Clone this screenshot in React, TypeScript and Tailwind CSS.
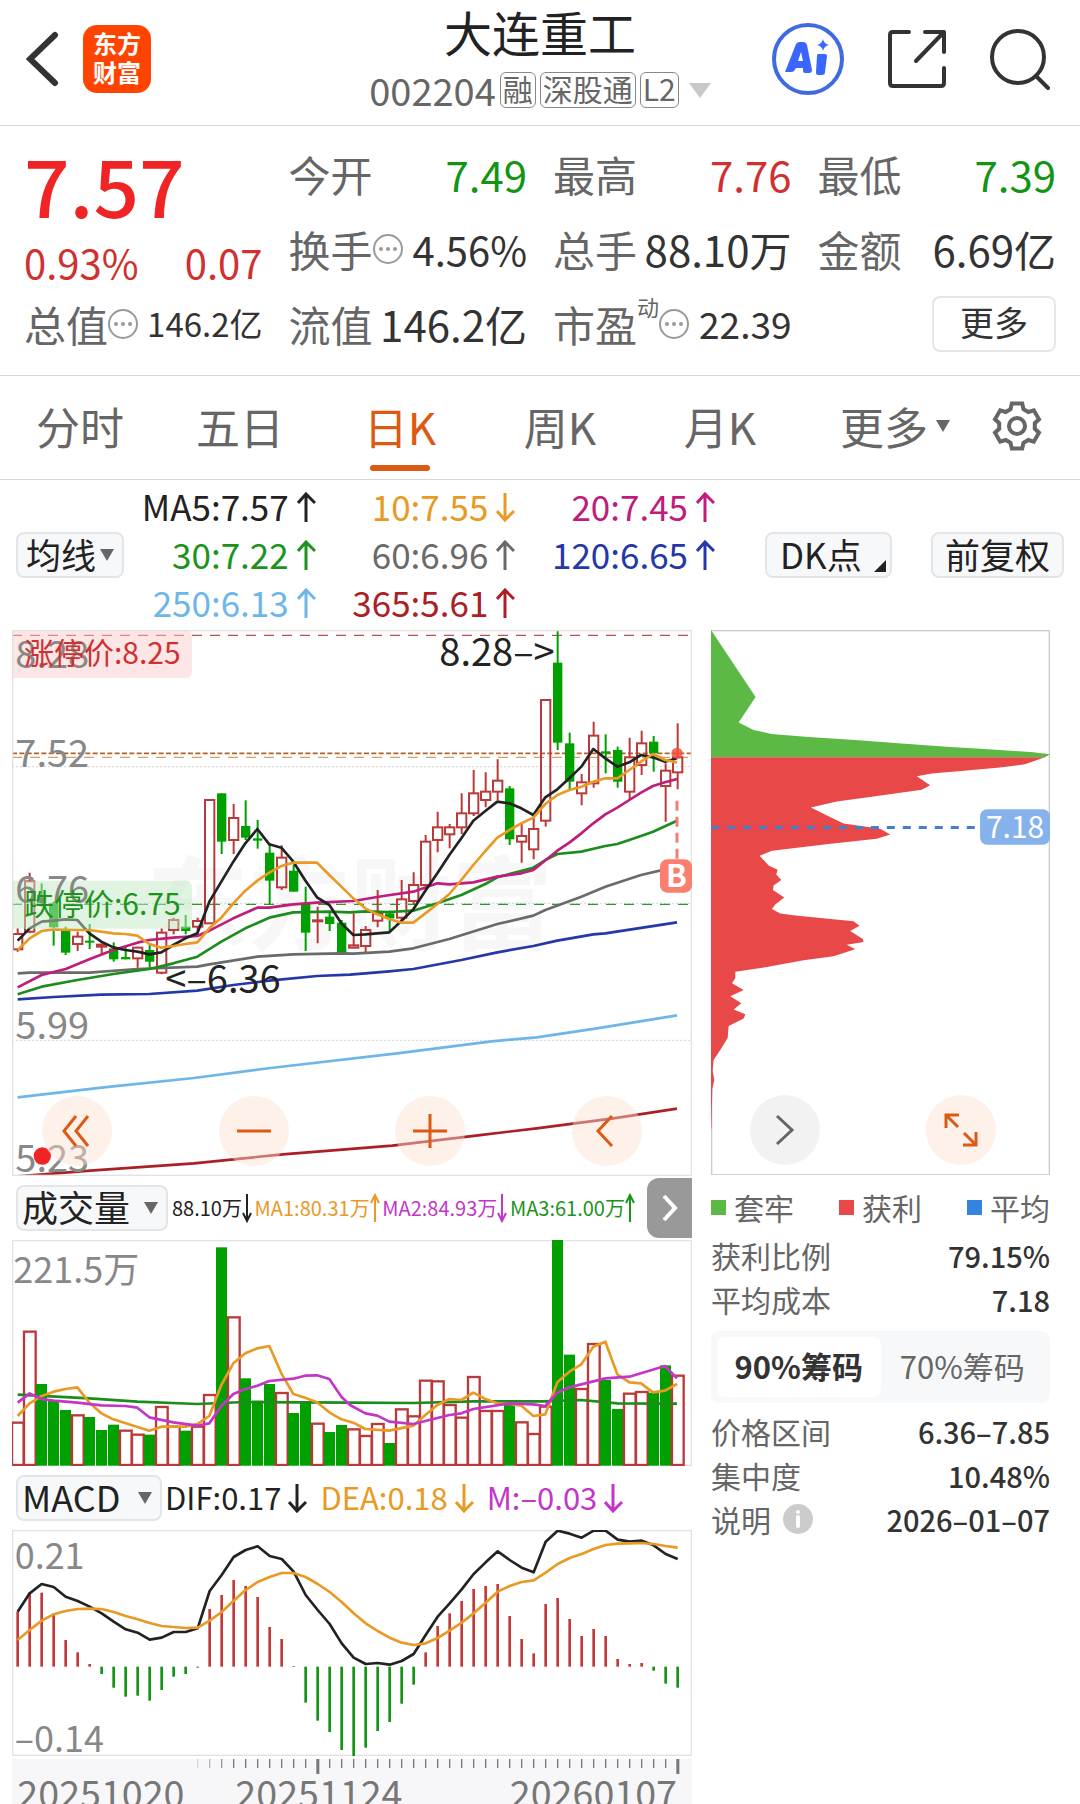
import React from "react";

const RED = "#b93a3a";
const GREEN = "#00a000";
const STEP = 36;
const FIRST = 53;
const xAt = (i: number) => FIRST + i * STEP;

type Candle = [kind: "r" | "g", high: number, top: number, bottom: number, low: number];

// Chart units: three per pixel at full width.
const candles: Candle[] = [
  ["r", 925, 942, 988, 995], ["r", 758, 784, 935, 940], ["g", 790, 825, 850, 860], ["g", 845, 850, 922, 977],
  ["g", 920, 932, 998, 1005], ["r", 935, 950, 972, 993], ["g", 912, 962, 968, 987], ["r", 970, 974, 980, 1005],
  ["g", 967, 985, 1018, 1025], ["g", 980, 1011, 1018, 1018], ["r", 980, 983, 1015, 1043], ["g", 975, 990, 1025, 1050],
  ["r", 925, 938, 1058, 1063], ["r", 893, 900, 930, 943], ["g", 885, 920, 933, 943], ["r", 893, 903, 920, 940],
  ["r", 540, 540, 910, 910], ["g", 520, 520, 665, 702], ["r", 552, 594, 660, 702], ["g", 541, 618, 653, 660],
  ["g", 600, 655, 662, 686], ["g", 675, 698, 782, 853], ["r", 676, 713, 802, 810], ["g", 735, 752, 815, 815],
  ["g", 800, 852, 938, 993], ["r", 860, 901, 904, 970], ["g", 878, 890, 912, 933], ["g", 900, 908, 998, 998],
  ["r", 880, 976, 983, 985], ["r", 918, 930, 978, 997], ["r", 810, 880, 902, 922], ["g", 872, 880, 895, 935],
  ["r", 780, 838, 893, 903], ["r", 757, 795, 843, 852], ["r", 645, 665, 795, 797], ["r", 575, 622, 660, 697],
  ["r", 612, 622, 643, 685], ["r", 520, 580, 622, 642], ["r", 450, 520, 580, 588], ["r", 457, 515, 540, 562],
  ["r", 418, 482, 515, 540], ["g", 498, 505, 658, 675], ["r", 607, 648, 665, 728], ["r", 590, 627, 688, 718],
  ["r", 240, 240, 602, 620], ["g", 30, 128, 368, 390], ["g", 338, 370, 485, 508], ["r", 462, 487, 520, 556],
  ["r", 305, 347, 490, 503], ["g", 343, 394, 400, 460], ["g", 380, 390, 485, 503], ["r", 353, 412, 515, 540],
  ["r", 332, 370, 435, 465], ["g", 348, 365, 400, 455], ["r", 430, 452, 498, 605], ["r", 310, 412, 457, 508],
];

const averages: { color: string; points: string }[] = [
  { color: "#6a6a6a", points: "53,1060 89,1058 268,1058 412,1047 592,1040 628,1033 772,1010 880,1003 1024,1000 1060,1001 1168,995 1240,985 1348,957 1492,912 1600,887 1636,870 1744,830 1816,800 1923,765 2031,740" },
  { color: "#2438a8", points: "53,1138 161,1131 304,1124 448,1122 592,1112 700,1095 808,1082 951,1068 1050,1064 1168,1054 1240,1047 1384,1020 1492,997 1600,978 1672,962 1780,943 1816,940 2031,907" },
  { color: "#6fb6e8", points: "53,1432 311,1402 582,1374 812,1344 1191,1300 1475,1264 1610,1252 1786,1226 2031,1186" },
  { color: "#ab1f27", points: "53,1669 271,1652 582,1630 839,1604 1177,1577 1434,1546 1610,1525 1840,1495 2031,1466" },
  { color: "#1c8c1c", points: "53,1123 125,1100 232,1080 340,1062 448,1047 520,1030 592,1010 664,965 736,925 808,893 880,877 988,875 1050,877 1096,874 1168,876 1240,872 1312,850 1384,825 1456,792 1492,772 1600,743 1636,720 1672,702 1744,695 1816,678 1852,672 1923,648 1959,635 2031,602" },
  { color: "#bf1c7c", points: "53,1102 125,1065 197,1047 268,1018 340,990 412,968 448,960 520,953 592,948 628,932 700,895 772,863 808,863 880,853 951,848 1060,843 1150,828 1240,815 1312,790 1348,793 1420,787 1492,770 1564,760 1600,750 1672,692 1708,668 1744,640 1780,610 1816,583 1852,563 1888,540 1923,518 1959,498 1995,487 2031,477" },
  { color: "#222222", points: "53,962 89,925 125,905 161,902 197,898 232,900 268,940 304,965 340,982 376,990 412,995 448,1003 484,997 520,975 556,955 592,940 628,845 664,785 700,725 736,670 772,627 808,673 844,683 880,725 915,780 951,832 988,855 1024,910 1060,945 1096,943 1132,940 1168,937 1204,903 1240,868 1276,812 1312,760 1348,705 1384,655 1420,602 1456,573 1492,545 1528,550 1564,565 1600,585 1636,532 1672,508 1708,475 1744,440 1780,387 1816,415 1852,440 1888,427 1923,405 1959,412 1995,425 2031,415" },
  { color: "#e89a24", points: "53,990 89,955 125,933 161,928 232,930 268,930 340,940 376,942 412,947 448,972 484,983 520,978 556,972 592,967 628,925 664,893 700,850 736,812 772,782 808,758 844,738 880,728 951,728 988,765 1024,800 1060,835 1096,865 1132,883 1168,897 1204,908 1240,908 1276,880 1312,852 1348,822 1384,780 1420,735 1456,693 1492,653 1528,630 1564,610 1600,593 1636,552 1672,525 1708,510 1744,500 1780,485 1816,475 1852,475 1888,450 1923,425 1959,402 1995,420 2031,427" },
];

const volumes =
  "578r 305r 462g 512g 540g 556r 561g 600g 584g 602r 614r 614g 531r 590r 602g 590r 495r 52g 262r 445g 512g 462g 489r 549g 517g 581r 606g 585g 598r 618r 582r 639g 538r 559r 452r 454r 525r 563r 441r 543r 543r 525g 577r 612r 530r 30g 374g 477r 342r 450g 537g 491r 486r 488g 406g 437r".split(" ");

const volumeLines = [
  { color: "#1c8c1c", points: "53,494 268,505 412,515 592,522 736,516 1050,518 1240,519 1420,514 1636,514 1744,510 1852,520 2031,521" },
  { color: "#e89a24", points: "53,558 89,520 125,498 161,485 197,477 232,472 268,518 304,550 340,568 448,602 484,590 556,590 592,582 628,558 664,465 700,400 736,370 772,355 808,348 844,430 880,492 915,503 951,517 988,547 1024,568 1060,578 1096,597 1168,602 1240,587 1276,555 1312,525 1348,507 1384,510 1420,488 1456,507 1492,520 1528,522 1564,527 1600,558 1636,553 1672,457 1708,425 1744,403 1780,350 1816,335 1852,433 1888,457 1923,460 1959,487 1995,482 2031,462" },
  { color: "#c436c8", points: "53,518 89,490 125,507 161,512 232,518 304,526 376,528 412,533 448,562 520,577 592,587 628,580 664,528 700,492 736,477 772,467 808,453 880,446 915,437 951,436 988,447 1024,500 1050,525 1096,550 1132,557 1168,575 1240,582 1276,573 1348,555 1384,550 1420,537 1528,520 1600,523 1636,528 1672,488 1708,472 1816,445 1888,440 1923,430 1995,408 2031,445" },
];

const macdBars = [335, 277, 278, 340, 420, 457, 492, 522, 563, 590, 587, 602, 570, 530, 522, 503, 327, 285, 240, 258, 291, 381, 417, 498, 608, 662, 696, 750, 768, 743, 693, 666, 611, 554, 457, 378, 340, 303, 267, 258, 252, 348, 417, 460, 312, 294, 357, 408, 387, 408, 477, 492, 489, 512, 551, 563];
const dif = [335, 280, 252, 261, 290, 303, 320, 340, 365, 388, 398, 419, 413, 396, 396, 385, 273, 225, 171, 150, 139, 168, 177, 215, 285, 330, 372, 430, 473, 492, 489, 494, 483, 462, 405, 350, 310, 268, 222, 187, 154, 180, 203, 217, 125, 92, 101, 113, 92, 92, 119, 125, 122, 136, 162, 177];
const dea = [420, 390, 362, 343, 333, 327, 326, 327, 336, 348, 358, 369, 378, 381, 384, 383, 362, 336, 302, 270, 246, 231, 219, 219, 231, 252, 276, 306, 340, 370, 393, 413, 428, 435, 430, 414, 392, 368, 340, 308, 275, 258, 246, 241, 218, 192, 174, 162, 147, 135, 131, 130, 129, 132, 138, 143];
const series = (values: number[]) => values.map((v, i) => `${xAt(i)},${v}`).join(" ");

const trapped = "0,0 134,201 83,278 128,300 181,312 293,321 433,330 573,341 718,351 798,356 968,367 1018,373 1003,382 0,382";
const profit =
  "0,382 1003,382 943,403 868,413 768,422 663,431 618,439 658,466 633,480 558,490 483,501 378,515 300,533 353,559 398,581 508,597 538,614 498,627 353,643 183,663 146,678 173,707 200,720 196,734 211,751 188,767 186,781 220,803 193,824 183,838 208,851 253,857 428,875 446,888 418,904 456,928 458,937 408,945 433,959 368,980 278,992 168,1012 73,1026 73,1045 63,1061 98,1081 58,1100 91,1121 68,1140 103,1154 98,1167 53,1189 50,1225 33,1253 8,1291 5,1324 10,1351 4,1378 1,1498 0,1498";

const gearPath = (() => {
  const pts: string[] = [];
  for (let k = 0; k < 6; k++) {
    for (const [r, d] of [[18, -21], [23, -13], [23, 13], [18, 21]]) {
      const a = ((k * 60 - 90 + d) * Math.PI) / 180;
      pts.push(`${(27 + r * Math.cos(a)).toFixed(1)} ${(27 + r * Math.sin(a)).toFixed(1)}`);
    }
  }
  return `M${pts.join("L")}Z`;
})();

function Arrow({ down = false, narrow = false }: { down?: boolean; narrow?: boolean }) {
  return (
    <svg viewBox={narrow ? "0 0 10 30" : "0 0 19 30"} className={narrow ? "h-[30px] w-[10px] shrink-0" : "h-[30px] w-[19px] shrink-0"} fill="none" stroke="currentColor" strokeWidth={narrow ? 2 : 3} role="img" aria-label={down ? "下降" : "上升"}>
      {narrow ? (
        <path d={down ? "M5 1V28M1 20L5 28L9 20" : "M5 29V2M1 10L5 2L9 10"} />
      ) : (
        <path d={down ? "M9 1V28M1 19L9 28L18 19" : "M9 30V2M1 11L9 2L18 11"} />
      )}
    </svg>
  );
}

function Caret({ className }: { className: string }) {
  return (
    <svg viewBox="0 0 14 12" className={className} fill="currentColor" preserveAspectRatio="none" aria-hidden="true">
      <path d="M0 0H14L7 12Z" />
    </svg>
  );
}

function More() {
  return (
    <svg viewBox="0 0 30 30" className="size-[30px] shrink-0" fill="none" stroke="#999" strokeWidth="2" aria-hidden="true">
      <circle cx="15" cy="15" r="14" />
      <g fill="#999" stroke="none">
        <circle cx="8" cy="15" r="2" />
        <circle cx="15" cy="15" r="2" />
        <circle cx="22" cy="15" r="2" />
      </g>
    </svg>
  );
}

function Stat({ label, value, tone = "text-[#333]", size = "text-[42px]", more, sup }: { label: string; value: string; tone?: string; size?: string; more?: boolean; sup?: string }) {
  return (
    <div className="flex h-[75px] items-center whitespace-nowrap">
      <dt className="flex items-center text-[42px] text-[#666]">
        {label}
        {sup && <sup className="top-0 mb-9 text-[22px]">{sup}</sup>}
        {more && <More />}
      </dt>
      <dd className={`ml-auto ${size} ${tone}`}>{value}</dd>
    </div>
  );
}

function Header() {
  const badge = "flex h-9 items-center rounded-md border border-[#888] px-[2px] pb-1 text-[30px]";
  return (
    <header className="flex h-[126px] items-center border-b border-[#d8d8d8] px-[26px]">
      <div className="flex flex-1 items-center gap-6 pr-1 pb-2">
        <button aria-label="返回">
          <svg viewBox="0 0 33 56" className="h-14 w-[33px]" fill="none" stroke="#333" strokeWidth="6" strokeLinecap="round">
            <path d="M29 4L4 28L29 52" />
          </svg>
        </button>
        <a href="#home" className="flex size-[68px] flex-col items-center justify-center rounded-[14px] bg-[#ff4400] pb-1 text-2xl leading-[29px] font-bold text-white">
          <span>东方</span>
          <span>财富</span>
        </a>
      </div>
      <div className="flex flex-col items-center self-start">
        <h1 className="text-[48px] leading-[62px] text-[#222]">大连重工</h1>
        <div className="mt-1 flex h-[52px] items-center gap-1 pb-1 text-[#666]">
          <span className="text-[38px]">002204</span>
          <span className={badge}>融</span>
          <span className={badge}>深股通</span>
          <span className={badge}>L2</span>
          <button aria-label="展开" className="ml-[6px] text-[#c8c8c8]">
            <Caret className="h-[15px] w-[22px]" />
          </button>
        </div>
      </div>
      <div className="flex flex-1 items-center justify-end gap-11 pr-1 pb-2">
        <button aria-label="Ai">
          <svg viewBox="0 0 72 72" className="size-[72px]">
            <circle cx="36" cy="36" r="34" fill="none" stroke="#4169e1" strokeWidth="4" />
            <path fill="#3a66ff" fillRule="evenodd" d="M13 49L24 21Q25 19 28 19H31Q34 19 35 22L40 47Q40 50 37 50H33Q31 50 31 48V45H24L22 48Q21 49 19 49ZM26 38H31L29 29Z" />
            <path fill="#3a66ff" d="M46 31H53Q55 31 55 33L53 49Q53 52 50 52H46Q44 52 44 49L45 33Q45 31 46 31ZM51 16Q52 21 57 22Q52 23 51 28Q50 23 45 22Q50 21 51 16Z" />
          </svg>
        </button>
        <button aria-label="分享">
          <svg viewBox="0 0 58 58" className="size-[58px]" fill="none" stroke="#333" strokeWidth="4" strokeLinecap="round" strokeLinejoin="round">
            <path d="M21 2H5Q2 2 2 5V53Q2 56 5 56H53Q56 56 56 53V38" />
            <path d="M37 2H56V22M55 3L28 31" />
          </svg>
        </button>
        <button aria-label="搜索">
          <svg viewBox="0 0 60 62" className="h-[62px] w-[60px]" fill="none" stroke="#333" strokeWidth="4" strokeLinecap="round">
            <circle cx="28" cy="29" r="26" />
            <path d="M46 48L58 60" />
          </svg>
        </button>
      </div>
    </header>
  );
}

function Summary() {
  return (
    <section className="border-b border-[#d8d8d8] px-6 pt-[10px] pb-[14px]">
      <dl className="grid grid-cols-4 gap-x-[26px]">
        <div>
          <div className="flex h-[94px] items-center text-[80px] font-medium text-[#f02424]">7.57</div>
          <div className="flex h-14 items-end justify-between pb-1 text-[40px] text-[#d03030]">
            <span>0.93%</span>
            <span>0.07</span>
          </div>
          <Stat label="总值" value="146.2亿" size="text-[33px]" more />
        </div>
        <div>
          <Stat label="今开" value="7.49" tone="text-[#149414]" />
          <Stat label="换手" value="4.56%" size="text-[40px]" more />
          <Stat label="流值" value="146.2亿" />
        </div>
        <div>
          <Stat label="最高" value="7.76" tone="text-[#d03030]" />
          <Stat label="总手" value="88.10万" />
          <Stat label="市盈" value="22.39" size="text-[37px]" sup="动" more />
        </div>
        <div>
          <Stat label="最低" value="7.39" tone="text-[#149414]" />
          <Stat label="金额" value="6.69亿" />
          <div className="flex h-[75px] items-center justify-end">
            <button className="h-14 w-[124px] rounded-lg border-2 border-[#e6e6e6] pb-1 text-[34px] text-[#333]">更多</button>
          </div>
        </div>
      </dl>
    </section>
  );
}

function Tabs() {
  return (
    <nav className="flex h-[104px] items-stretch border-b border-[#d8d8d8] text-[44px] text-[#666]">
      {["分时", "五日", "日K", "周K", "月K"].map((tab) => (
        <button key={tab} className={`relative flex-[160] pb-1 ${tab === "日K" ? "text-[#dc5a14]" : ""}`}>
          {tab}
          {tab === "日K" && <span className="absolute bottom-2 left-1/2 h-[6px] w-[60px] -translate-x-1/2 rounded-full bg-[#dc5a14]" />}
        </button>
      ))}
      <button className="flex flex-[190] items-center justify-center gap-2 pb-1">
        更多
        <Caret className="h-3 w-[14px]" />
      </button>
      <button aria-label="设置" className="flex flex-[90] items-center pb-1">
        <svg viewBox="0 0 54 54" className="size-[54px]" fill="none" stroke="#666" strokeWidth="4">
          <path d={gearPath} />
          <circle cx="27" cy="27" r="8" />
        </svg>
      </button>
    </nav>
  );
}

const maValues: [string, string, boolean][] = [
  ["MA5:7.57", "text-[#222]", false],
  ["10:7.55", "text-[#e89a24]", true],
  ["20:7.45", "text-[#bf1c7c]", false],
  ["30:7.22", "text-[#1c941c]", false],
  ["60:6.96", "text-[#6a6a6a]", false],
  ["120:6.65", "text-[#2438a8]", false],
  ["250:6.13", "text-[#6fb6e8]", false],
  ["365:5.61", "text-[#ab1f27]", false],
];

function AverageBar() {
  const chip = "flex h-[46px] items-center rounded-lg border-2 border-[#e4e5e8] bg-[#f7f8fa] text-[35px] text-[#222]";
  return (
    <section className="flex h-[150px] items-center px-4">
      <button className={`${chip} shrink-0 gap-1 px-2`}>
        <span className="pb-1">均线</span>
        <Caret className="h-3 w-[14px] text-[#666]" />
      </button>
      <ul className="-ml-2 grid flex-1 grid-cols-3 text-[35px]">
        {maValues.map(([text, tone, down]) => (
          <li key={text} className={`flex h-12 items-center justify-end gap-2 whitespace-nowrap ${tone}`}>
            <span className="pb-1">{text}</span>
            <Arrow down={down} />
          </li>
        ))}
      </ul>
      <button className={`${chip} relative ml-[50px] w-[127px] shrink-0 pl-[13px]`}>
        <span className="pb-1">DK点</span>
        <svg viewBox="0 0 12 12" className="absolute right-1 bottom-1 size-3" aria-hidden="true">
          <path d="M12 0V12H0Z" fill="#222" />
        </svg>
      </button>
      <button className={`${chip} ml-[39px] w-[133px] shrink-0 justify-center`}>
        <span className="pb-1">前复权</span>
      </button>
    </section>
  );
}

const round = "flex size-[70px] items-center justify-center rounded-full";

function PriceChart() {
  return (
    <div className="relative">
      <svg viewBox="36 30 2040 1638" className="block h-auto w-full">
        <text x="440" y="965" fontSize="305" fontWeight="700" fill="#f7f7f7">东方财富</text>
        <g stroke="#d4d4d4" strokeWidth="3" strokeDasharray="6 6">
          <path d="M36 440H2076M36 850H2076M36 1261H2076" />
        </g>
        <path d="M36 46H2076" stroke="#c0504d" strokeWidth="4" strokeDasharray="30 24" />
        <path d="M36 400H2076" stroke="#b5622a" strokeWidth="5" strokeDasharray="15 7" />
        <path d="M36 412H2076" stroke="#d2a068" strokeWidth="4" strokeDasharray="30 24" />
        <path d="M36 853H2076" stroke="#2a9a2a" strokeWidth="4" strokeDasharray="30 24" />
        {candles.map(([kind, high, top, bottom, low], i) => {
          const x = xAt(i);
          return kind === "r" ? (
            <g key={i} fill="none" stroke={RED} strokeWidth="6">
              <path d={`M${x} ${high}V${top}M${x} ${bottom}V${low}`} />
              <rect x={x - 14} y={top} width="28" height={bottom - top} />
            </g>
          ) : (
            <g key={i} fill={GREEN}>
              <rect x={x - 3} y={high} width="6" height={low - high} />
              <rect x={x - 14} y={top} width="28" height={bottom - top} />
            </g>
          );
        })}
        {averages.map((line) => (
          <polyline key={line.color} points={line.points} fill="none" stroke={line.color} strokeWidth="8" strokeLinejoin="round" />
        ))}
        <path d="M36 30H556Q576 30 576 50V154Q576 174 556 174H36Z" fill="#fcc8c8" fillOpacity="0.45" />
        <path d="M36 782H556Q576 782 576 802V906Q576 926 556 926H36Z" fill="#c4e8c4" fillOpacity="0.5" />
        <g fill="#888" fontSize="114">
          <text x="46" y="143">8.28</text>
          <text x="46" y="440">7.52</text>
          <text x="46" y="848">6.76</text>
          <text x="46" y="1258">5.99</text>
          <text x="46" y="1657">5.23</text>
        </g>
        <text x="72" y="133" fontSize="90" fill="#d03030">涨停价:8.25</text>
        <text x="72" y="885" fontSize="90" fill="#1c941c">跌停价:6.75</text>
        <g fill="#222" fontSize="114">
          <text x="496" y="1119">&lt;–6.36</text>
          <text x="1664" y="137" textAnchor="end">8.28–&gt;</text>
        </g>
        <path d="M2031 542V718" stroke="#f08070" strokeWidth="9" strokeDasharray="30 18" />
        <circle cx="2031" cy="400" r="17" fill="#f4503c" fillOpacity="0.85" />
        <rect x="38" y="32" width="2036" height="1634" fill="none" stroke="#e2e2e2" strokeWidth="4" />
        <rect x="1980" y="718" width="96" height="100" rx="22" fill="#fb7e6e" />
        <text x="2029" y="800" fontSize="92" fontWeight="700" fill="#fff" textAnchor="middle">B</text>
        <circle cx="127" cy="1608" r="26" fill="#f02424" />
      </svg>
      <div className="absolute inset-x-0 bottom-[10px] flex justify-between pr-[50px] pl-[30px]">
        <button aria-label="最早" className={`${round} bg-[#fbe0d0]/45`}>
          <svg viewBox="0 0 30 34" className="h-[34px] w-[30px]" fill="none" stroke="#dc5a14" strokeWidth="3"><path d="M14 2L2 17L14 32M26 2L14 17L26 32" /></svg>
        </button>
        <button aria-label="缩小" className={`${round} bg-[#fbe0d0]/45`}>
          <svg viewBox="0 0 34 34" className="size-[34px]" stroke="#dc5a14" strokeWidth="3"><path d="M0 17H34" /></svg>
        </button>
        <button aria-label="放大" className={`${round} bg-[#fbe0d0]/45`}>
          <svg viewBox="0 0 34 34" className="size-[34px]" stroke="#dc5a14" strokeWidth="3"><path d="M0 17H34M17 0V34" /></svg>
        </button>
        <button aria-label="向前" className={`${round} bg-[#fbe0d0]/45`}>
          <svg viewBox="0 0 30 34" className="h-[34px] w-[30px]" fill="none" stroke="#dc5a14" strokeWidth="3"><path d="M20 2L6 17L20 32" /></svg>
        </button>
      </div>
    </div>
  );
}

function VolumePanel() {
  const items: [string, string, boolean][] = [
    ["88.10万", "text-[#222]", true],
    ["MA1:80.31万", "text-[#e89a24]", false],
    ["MA2:84.93万", "text-[#c436c8]", true],
    ["MA3:61.00万", "text-[#1c941c]", false],
  ];
  return (
    <>
      <div className="flex h-16 items-center pl-1">
        <button className="flex h-[46px] w-[152px] shrink-0 items-center justify-between rounded-lg border-2 border-[#e4e5e8] bg-[#f7f8fa] pr-2 pl-1 text-[36px] whitespace-nowrap text-[#222]">
          <span className="pb-1">成交量</span>
          <Caret className="h-3 w-[14px] text-[#666]" />
        </button>
        <ul className="flex min-w-0 flex-1 items-center justify-between pr-3 pl-1 text-[20px]">
          {items.map(([text, tone, down]) => (
            <li key={text} className={`flex items-center whitespace-nowrap ${tone}`}>
              {text}
              <Arrow down={down} narrow />
            </li>
          ))}
        </ul>
        <button aria-label="更多指标" className="flex h-[60px] w-[45px] shrink-0 items-center justify-center rounded-l-xl bg-[#999]">
          <svg viewBox="0 0 18 28" className="h-7 w-[18px]" fill="none" stroke="#fff" strokeWidth="4"><path d="M3 2L14 14L3 26" /></svg>
        </button>
      </div>
      <svg viewBox="36 30 2040 678" className="block h-auto w-full">
        <rect x="38" y="32" width="2036" height="674" fill="none" stroke="#e2e2e2" strokeWidth="4" />
        <text x="40" y="160" fontSize="108" fill="#888">221.5万</text>
        {volumes.map((item, i) => {
          const top = parseInt(item);
          const x = xAt(i);
          return item.endsWith("r") ? (
            <rect key={i} x={x - 17} y={top} width="35" height={705 - top} fill="none" stroke={RED} strokeWidth="7" />
          ) : (
            <rect key={i} x={x - 17} y={top} width="33" height={707 - top} fill={GREEN} />
          );
        })}
        {volumeLines.map((line) => (
          <polyline key={line.color} points={line.points} fill="none" stroke={line.color} strokeWidth="8" strokeLinejoin="round" />
        ))}
      </svg>
    </>
  );
}

function MacdPanel() {
  const items: [string, string][] = [
    ["DIF:0.17", "text-[#222]"],
    ["DEA:0.18", "text-[#e89a24]"],
    ["M:–0.03", "text-[#c436c8]"],
  ];
  return (
    <>
      <div className="flex h-16 items-center pl-1">
        <button className="flex h-[46px] w-[146px] shrink-0 items-center justify-between rounded-lg border-2 border-[#e4e5e8] bg-[#f7f8fa] pr-2 pl-1 text-[36px] text-[#222]">
          <span className="pb-1">MACD</span>
          <Caret className="h-3 w-[14px] text-[#666]" />
        </button>
        <ul className="flex items-center gap-[13px] pl-[3px] text-[31px]">
          {items.map(([text, tone]) => (
            <li key={text} className={`flex items-center gap-[7px] whitespace-nowrap ${tone}`}>
              <span className="pb-1">{text}</span>
              <Arrow down />
            </li>
          ))}
        </ul>
      </div>
      <svg viewBox="36 90 2040 678" className="block h-auto w-full">
        <rect x="38" y="92" width="2036" height="674" fill="none" stroke="#e2e2e2" strokeWidth="4" />
        <g fill="#888" fontSize="108">
          <text x="44" y="207">0.21</text>
          <text x="44" y="755">–0.14</text>
        </g>
        {macdBars.map((v, i) => (
          <rect key={i} x={xAt(i) - 4} y={Math.min(v, 500)} width="8" height={Math.abs(v - 500)} fill={v < 500 ? "#c23b3b" : "#149414"} />
        ))}
        <polyline points={series(dif)} fill="none" stroke="#222" strokeWidth="8" strokeLinejoin="round" />
        <polyline points={series(dea)} fill="none" stroke="#e89a24" strokeWidth="8" strokeLinejoin="round" />
      </svg>
      <svg viewBox="36 777 2040 135" className="mt-[3px] block h-auto w-full bg-[#f7f7f9]">
        {macdBars.map((_, i) => {
          if (i < 15) return null;
          const major = i === 25 || i === 55;
          return <rect key={i} x={xAt(i) - (major ? 4 : 2)} y="777" width={major ? 9 : 4} height={major ? 45 : 27} fill="#777" opacity={Math.min(1, (i - 14) * 0.25)} />;
        })}
        <g fill="#777" fontSize="113">
          <text x="52" y="924">20251020</text>
          <text x="706" y="924">20251124</text>
          <text x="2031" y="924" textAnchor="end">20260107</text>
        </g>
      </svg>
    </>
  );
}

function ChipRow({ label, value, info }: { label: string; value: string; info?: boolean }) {
  return (
    <div className="flex h-11 items-center justify-between whitespace-nowrap">
      <dt className="flex items-center gap-3 text-[30px] text-[#666]">
        {label}
        {info && (
          <svg viewBox="0 0 30 30" className="size-[30px]" role="img" aria-label="说明">
            <circle cx="15" cy="15" r="15" fill="#ccc" />
            <circle cx="15" cy="8" r="2" fill="#fff" />
            <path d="M15 13V22" stroke="#fff" strokeWidth="4" strokeLinecap="round" />
          </svg>
        )}
      </dt>
      <dd className="text-[29px] font-medium text-[#333]">{value}</dd>
    </div>
  );
}

function ChipPanel() {
  const legend = [
    ["套牢", "bg-[#5cb946]"],
    ["获利", "bg-[#e84848]"],
    ["平均", "bg-[#3682e0]"],
  ];
  return (
    <aside className="min-w-0 flex-[339]">
      <div className="relative">
        <svg viewBox="0 0 1018 1638" className="block h-auto w-full">
          <rect x="2" y="2" width="1014" height="1634" fill="none" stroke="#ccc" strokeWidth="4" />
          <polygon points={trapped} fill="#5cb946" />
          <polygon points={profit} fill="#e84848" />
          <path d="M0 593H794" stroke="#3f80cc" strokeWidth="9" strokeDasharray="24 24" />
          <rect x="808" y="538" width="210" height="107" rx="22" fill="#86b2ec" />
          <text x="913" y="625" fontSize="90" fill="#fff" textAnchor="middle">7.18</text>
        </svg>
        <div className="absolute inset-x-0 bottom-[10px] flex justify-between pr-[54px] pl-[39px]">
          <button aria-label="下一个" className={`${round} bg-[#f2f2f2]`}>
            <svg viewBox="0 0 20 32" className="h-8 w-5" fill="none" stroke="#666" strokeWidth="3"><path d="M2 2L17 16L2 30" /></svg>
          </button>
          <button aria-label="全屏" className={`${round} bg-[#fef1ea]`}>
            <svg viewBox="0 0 34 34" className="size-[34px]" fill="none" stroke="#dc5a14" strokeWidth="3"><path d="M2 15V2H15M3 3L14 14M32 19V32H19M31 31L20 20" /></svg>
          </button>
        </div>
      </div>
      <ul className="mt-[10px] flex h-11 items-center justify-between text-[30px] whitespace-nowrap text-[#666]">
        {legend.map(([name, color]) => (
          <li key={name} className="flex items-center gap-2">
            <span className={`size-[15px] ${color}`} />
            {name}
          </li>
        ))}
      </ul>
      <dl className="mt-1">
        <ChipRow label="获利比例" value="79.15%" />
        <ChipRow label="平均成本" value="7.18" />
      </dl>
      <div className="mt-[10px] mb-[6px] flex h-[72px] rounded-lg bg-[#f7f8fa] p-[6px] text-[31px] whitespace-nowrap">
        <button className="flex-1 rounded-lg bg-white pb-1 font-bold text-[#333]">90%筹码</button>
        <button className="flex-1 pb-1 text-[#666]">70%筹码</button>
      </div>
      <dl>
        <ChipRow label="价格区间" value="6.36–7.85" />
        <ChipRow label="集中度" value="10.48%" />
        <ChipRow label="说明" value="2026–01–07" info />
      </dl>
    </aside>
  );
}

export default function App() {
  return (
    <main className="w-full bg-white font-['Noto_Sans_CJK_SC',sans-serif] leading-none">
      <Header />
      <Summary />
      <Tabs />
      <AverageBar />
      <div className="flex items-start gap-[19px] pr-[30px] pl-3">
        <div className="min-w-0 flex-[680]">
          <PriceChart />
          <VolumePanel />
          <MacdPanel />
        </div>
        <ChipPanel />
      </div>
    </main>
  );
}
